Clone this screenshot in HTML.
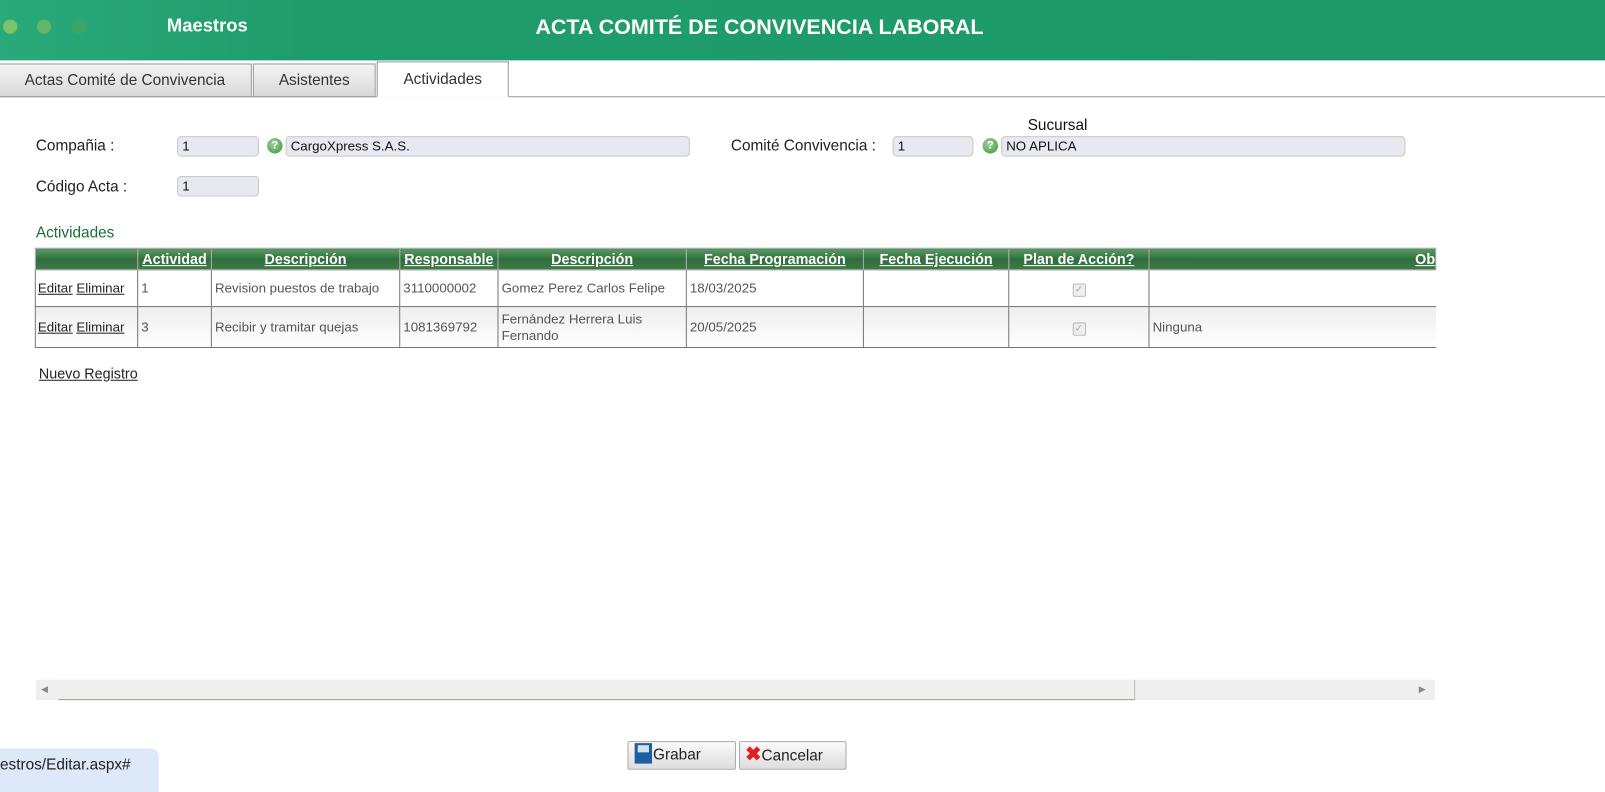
<!DOCTYPE html>
<html><head><meta charset="utf-8"><style>
*{margin:0;padding:0;box-sizing:border-box}
body{width:1605px;height:774px;overflow:hidden;background:#fff;font-family:"Liberation Sans",sans-serif;color:#222}
#w{position:relative;width:1568px;height:756px;transform:scale(1.02360);transform-origin:0 0}
.hdr{position:absolute;left:0;top:0;width:1568px;height:59px;background:linear-gradient(90deg,#2aa97a 0,#1f9c6c 300px,#1e9a6a 100%)}
.dot{position:absolute;top:19px;width:14px;height:14px;border-radius:50%}
.a{position:absolute;white-space:nowrap}
.tab{position:absolute;top:62px;height:33px;border:1px solid #999;background:linear-gradient(#f4f4f4,#d8d8d8);font-size:15px;color:#333;text-align:center;line-height:31px}
.inp{position:absolute;height:20px;border:1px solid #c8c8d0;border-radius:4px;background:#e8e8f0;font-size:13px;padding-left:4px;line-height:18px;color:#111}
.q{position:absolute;width:15px;height:15px;border-radius:50%;background:radial-gradient(circle at 40% 35%,#9fd49a,#3d8f3a);color:#fff;font-size:11px;font-weight:bold;text-align:center;line-height:15px}
table{position:absolute;left:34px;top:242px;border-collapse:collapse;font-size:13px;color:#555}
th{background:linear-gradient(#5a9a65,#2e6e3a 50%,#3f7a4a);color:#fff;text-decoration:underline;font-weight:bold;height:21px;border:1px solid #aaa;font-size:14px;padding:0 1px;white-space:nowrap}
td{border:1px solid #777;padding:0 3px;line-height:16px}
td a{color:#222;text-decoration:underline}
.cb{display:inline-block;width:13px;height:13px;border:1px solid #bbb;background:#eee;border-radius:2px;color:#aaa;font-size:10px;line-height:11px}
.btn{position:absolute;top:724px;height:28px;border:1px solid #aaa;border-radius:2px;background:linear-gradient(#fafafa,#ddd);font-size:15px;color:#222;line-height:26px}
</style></head><body><div id="w">
<div class="hdr">
<div class="dot" style="left:3px;background:#7cc26a"></div>
<div class="dot" style="left:36px;background:#62b668"></div>
<div class="dot" style="left:70px;background:#3ea56a"></div>
<div class="a" style="left:163px;top:15px;color:#fff;font-weight:bold;font-size:18px">Maestros</div>
<div class="a" style="left:523px;top:15px;color:#fff;font-weight:bold;font-size:21px">ACTA COMITÉ DE CONVIVENCIA LABORAL</div>
</div>
<div style="position:absolute;left:0;top:94px;width:1568px;height:1px;background:#999"></div>
<div class="tab" style="left:-2px;width:248px">Actas Comité de Convivencia</div>
<div class="tab" style="left:247px;width:120px">Asistentes</div>
<div class="tab" style="left:368px;top:60px;width:129px;height:35px;background:#fff;border-bottom:1px solid #fff;line-height:34px">Actividades</div>
<div class="a" style="left:35px;top:134px;font-size:15px">Compañia :</div>
<div class="inp" style="left:173px;top:133px;width:80px">1</div>
<div class="q" style="left:261px;top:135px">?</div>
<div class="inp" style="left:279px;top:133px;width:395px">CargoXpress S.A.S.</div>
<div class="a" style="left:1004px;top:114px;font-size:15px;color:#111">Sucursal</div>
<div class="a" style="left:714px;top:134px;font-size:15px">Comité Convivencia :</div>
<div class="inp" style="left:872px;top:133px;width:79px">1</div>
<div class="q" style="left:960px;top:135px">?</div>
<div class="inp" style="left:978px;top:133px;width:395px">NO APLICA</div>
<div class="a" style="left:35px;top:174px;font-size:15px">Código Acta :</div>
<div class="inp" style="left:173px;top:172px;width:80px">1</div>
<div class="a" style="left:35px;top:219px;font-size:15px;color:#1a6e3a">Actividades</div>
<table>
<tr><th style="width:100px"></th><th style="width:72px">Actividad</th><th style="width:184px">Descripción</th><th style="width:96px">Responsable</th><th style="width:184px">Descripción</th><th style="width:173px">Fecha Programación</th><th style="width:142px">Fecha Ejecución</th><th style="width:137px">Plan de Acción?</th><th style="width:280px;text-align:right;padding-right:0">Ob</th></tr>
<tr style="height:36px"><td style="padding:0 2px"><a>Editar</a> <a>Eliminar</a></td><td>1</td><td>Revision puestos de trabajo</td><td>3110000002</td><td>Gomez Perez Carlos Felipe</td><td>18/03/2025</td><td></td><td style="text-align:center"><span class="cb">✓</span></td><td style="border-right:none"></td></tr>
<tr style="height:40px;background:linear-gradient(#eee,#fff)"><td style="padding:0 2px"><a>Editar</a> <a>Eliminar</a></td><td>3</td><td>Recibir y tramitar quejas</td><td>1081369792</td><td>Fernández Herrera Luis Fernando</td><td>20/05/2025</td><td></td><td style="text-align:center"><span class="cb">✓</span></td><td style="border-right:none">Ninguna</td></tr>
</table>
<div class="a" style="left:38px;top:357px;font-size:14px;text-decoration:underline;color:#222">Nuevo Registro</div>
<div style="position:absolute;left:35px;top:664px;width:1367px;height:20px;background:#efefef"></div>
<div style="position:absolute;left:57px;top:664px;width:1052px;height:20px;border-right:1px solid #bbb;border-bottom:1px solid #9aa880;background:#efefef"></div>
<div class="a" style="left:40px;top:668px;font-size:9px;color:#888">◀</div>
<div class="a" style="left:1386px;top:668px;font-size:9px;color:#888">▶</div>
<div style="position:absolute;left:0;top:731px;width:155px;height:43px;background:#dde8f8;border-radius:0 8px 0 0"></div>
<div class="a" style="left:0;top:739px;font-size:15px;color:#222">estros/Editar.aspx#</div>
<div class="btn" style="left:613px;width:106px"><span style="display:inline-block;width:17px;height:20px;background:#1d5fa0;vertical-align:-4px;margin:0 1px 0 6px;position:relative"><span style="position:absolute;left:3px;top:2px;width:11px;height:7px;background:#cfe0f0"></span></span>Grabar</div>
<div class="btn" style="left:722px;width:105px"><span style="color:#e02020;font-weight:bold;font-size:19px;margin-left:5px">✖</span>Cancelar</div>
</div></body></html>
